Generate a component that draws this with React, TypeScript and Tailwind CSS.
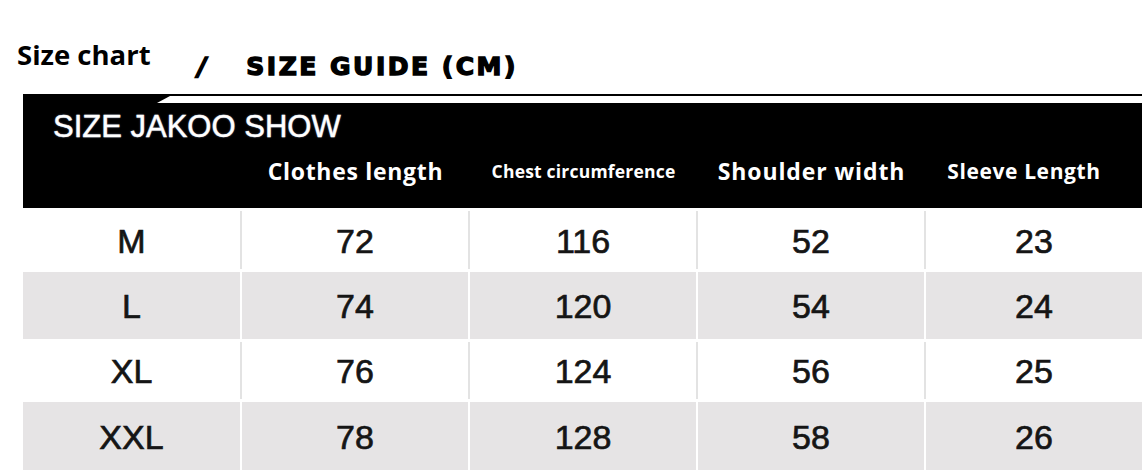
import React from 'react';

type Row = { size: string; values: number[]; height: string; shaded: boolean };

const rows: Row[] = [
  { size: 'M', values: [72, 116, 52, 23], height: 'h-[64px]', shaded: false },
  { size: 'L', values: [74, 120, 54, 24], height: 'h-[67px]', shaded: true },
  { size: 'XL', values: [76, 124, 56, 25], height: 'h-[63px]', shaded: false },
  { size: 'XXL', values: [78, 128, 58, 26], height: 'h-[68px]', shaded: true },
];

const cols = 'grid grid-cols-[217px_228px_228px_228px_218px]';

const App: React.FC = () => {
  return (
    <div className="w-[1142px] h-[476px] bg-white overflow-hidden font-['Liberation_Sans',Arial,sans-serif]">
      {/* title line */}
      <div className="flex items-end h-[94px] pb-[15px]">
        <span className="ml-[17px] mb-[11px] text-[27.5px] font-bold leading-none text-black font-['Open_Sans','Noto_Sans',sans-serif]">
          Size chart
        </span>
        <span className="ml-[47px] text-[24px] font-bold leading-none italic text-black font-['DejaVu_Sans',sans-serif] [-webkit-text-stroke:1.5px_black]">
          /
        </span>
        <span className="ml-[40px] text-[25px] font-bold leading-none tracking-[2.5px] text-black font-['DejaVu_Sans','Verdana',sans-serif] [-webkit-text-stroke:1.4px_black]">
          SIZE GUIDE (CM)
        </span>
      </div>

      <div className="ml-[23px]">
        {/* black header */}
        <div className="relative bg-black h-[114px] flex flex-col">
          <div className="absolute top-[2px] left-[134px] right-0 h-[7px] bg-white [clip-path:polygon(13px_0,100%_0,100%_100%,0_100%)]" />
          <div className="pl-[30px] pt-[17px] text-[31px] leading-none text-white [text-shadow:0_0_2px_rgba(180,200,255,0.6)] [-webkit-text-stroke:0.4px_white]">
            SIZE JAKOO SHOW
          </div>
          <div className={`${cols} items-center mt-[12px] text-white font-bold font-['Open_Sans','Noto_Sans',sans-serif]`}>
            <div />
            <div className="text-center text-[23px] tracking-[0.7px] pl-[3px]">Clothes length</div>
            <div className="text-center text-[17.5px] tracking-[0.2px] pl-[3px]">Chest circumference</div>
            <div className="text-center text-[23px] tracking-[0.9px] pl-[3px]">Shoulder width</div>
            <div className="text-center text-[21px] tracking-[0.6px] pr-[18px]">Sleeve Length</div>
          </div>
        </div>

        {/* body rows */}
        {rows.map((row) => (
          <div
            key={row.size}
            className={`${cols} ${row.height} ${row.shaded ? 'bg-[#e6e4e5]' : 'bg-white'} text-[34px] text-[#151515] [-webkit-text-stroke:0.7px_#151515]`}
          >
            <div className="flex items-center justify-center pt-[2px]">{row.size}</div>
            {row.values.map((v, i) => (
              <div
                key={i}
                className={`flex items-center justify-center pt-[2px] border-l-2 ${row.shaded ? 'border-white' : 'border-[#e3e3e3] my-[3px]'}`}
              >
                {v}
              </div>
            ))}
          </div>
        ))}
      </div>
    </div>
  );
};

export default App;
